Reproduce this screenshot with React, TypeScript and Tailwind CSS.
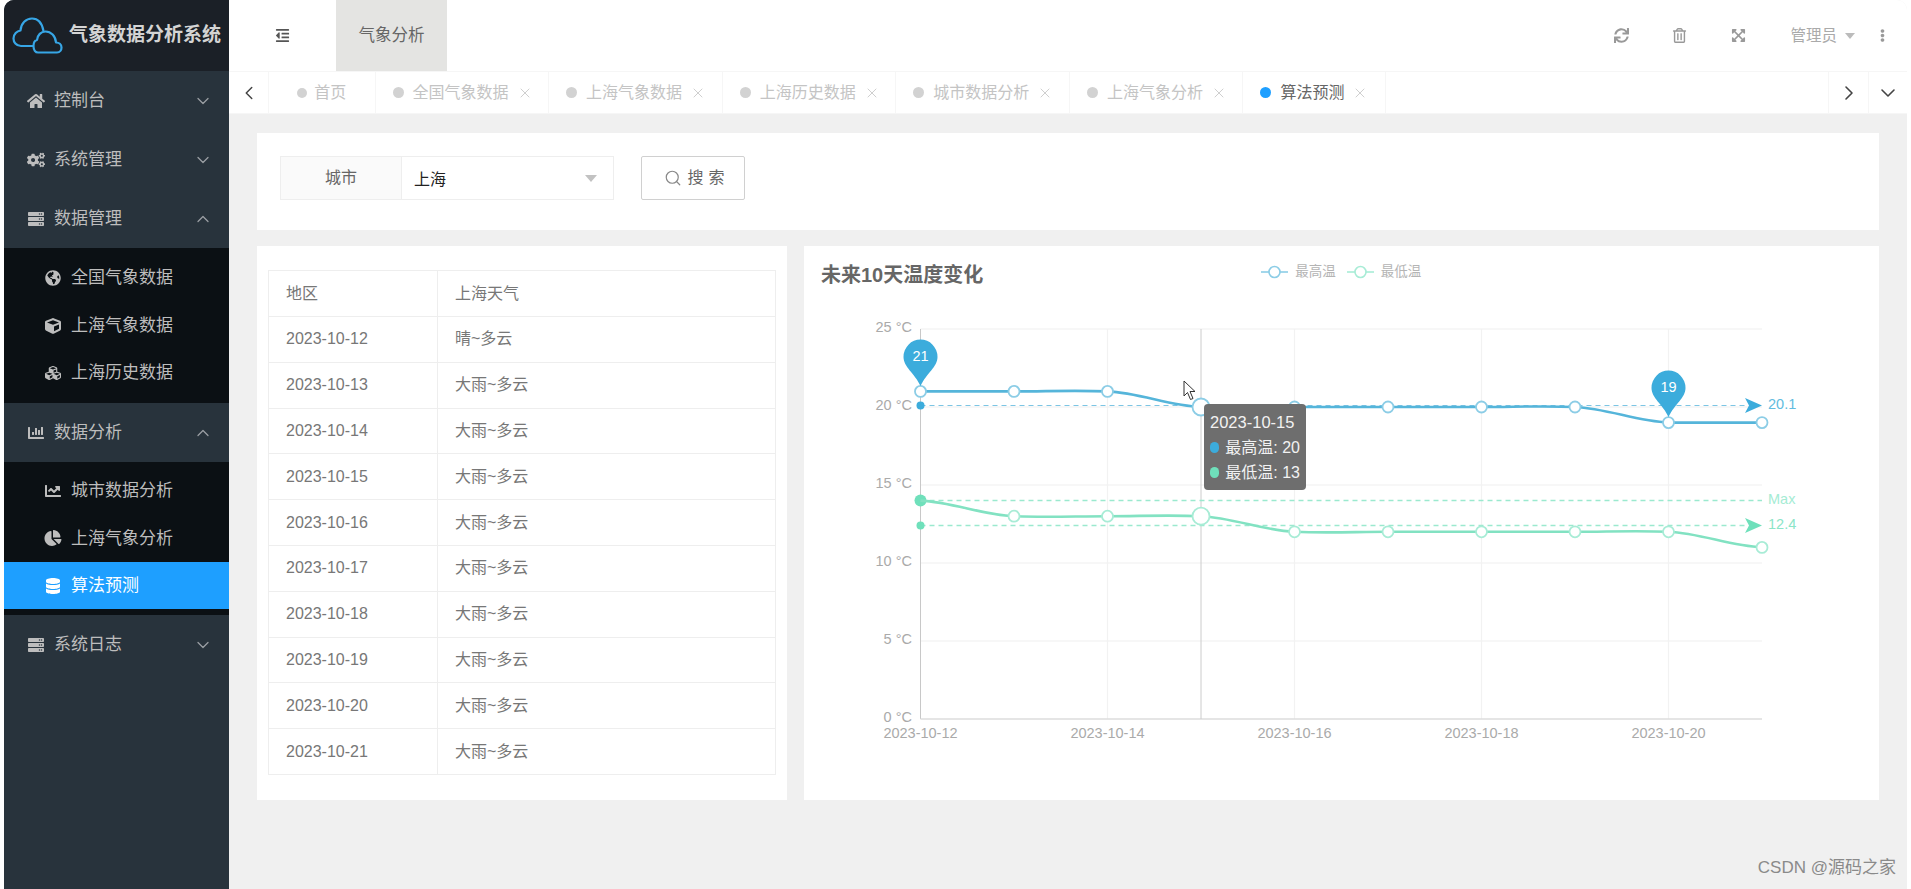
import { FaHome, FaCogs, FaServer, FaGlobeAmericas, FaCube, FaCubes, FaChartBar, FaChartLine, FaChartPie, FaDatabase, FaSync, FaRegTrashAlt, FaExpandArrowsAlt, FaEllipsisV, FaOutdent } from "react-icons/fa";
import { ChevronDown, ChevronUp, ChevronLeft, ChevronRight, Search, X } from "lucide-react";
import type { ComponentType } from "react";

const FONT = { fontFamily: '"Liberation Sans", "Noto Sans CJK SC", sans-serif' };

const tabs = ["全国气象数据", "上海气象数据", "上海历史数据", "城市数据分析", "上海气象分析"];

const rows = [
  ["2023-10-12", "晴~多云"],
  ["2023-10-13", "大雨~多云"],
  ["2023-10-14", "大雨~多云"],
  ["2023-10-15", "大雨~多云"],
  ["2023-10-16", "大雨~多云"],
  ["2023-10-17", "大雨~多云"],
  ["2023-10-18", "大雨~多云"],
  ["2023-10-19", "大雨~多云"],
  ["2023-10-20", "大雨~多云"],
  ["2023-10-21", "大雨~多云"],
];

const BLUE = "#3cacdc";
const GREEN = "#6fe0bb";
const xAt = (i: number) => 920.5 + i * 93.5;
const yAt = (v: number) => 719 - 15.6 * v;

const maxTemp = [21, 21, 21, 20, 20, 20, 20, 20, 19, 19];
const minTemp = [14, 13, 13, 13, 12, 12, 12, 12, 12, 11];

// smooth line the way echarts draws it, flat where neighbours are equal
const linePath = (data: number[]) => {
  let d = `M${xAt(0)} ${yAt(data[0])}`;
  for (let i = 0; i < data.length - 1; i++) {
    const x0 = xAt(i);
    const x1 = xAt(i + 1);
    const y0 = yAt(data[i]);
    const y1 = yAt(data[i + 1]);
    const prev = i > 0 ? yAt(data[i - 1]) : y0;
    const next = i < data.length - 2 ? yAt(data[i + 2]) : y1;
    const last = i === data.length - 2 && y0 === y1;
    const c1 = last ? y0 : y0 + (y1 - prev) * 0.09;
    const c2 = y1 - (next - y0) * 0.09;
    d += ` C${x0 + 32} ${c1} ${x1 - 32} ${c2} ${x1} ${y1}`;
  }
  return d;
};

const Pin = ({ x, tip, label }: { x: number; tip: number; label: string }) => (
  <g>
    <path
      d={`M${x} ${tip} C${x - 6} ${tip - 13} ${x - 17} ${tip - 19} ${x - 17} ${tip - 29} A17 17.5 0 1 1 ${x + 17} ${tip - 29} C${x + 17} ${tip - 19} ${x + 6} ${tip - 13} ${x} ${tip} Z`}
      fill={BLUE}
    />
    <text x={x} y={tip - 25} textAnchor="middle" fontSize="14.5" fill="#fff">
      {label}
    </text>
  </g>
);

const TempChart = () => (
  <svg viewBox="804 296 1075 504" className="block w-full h-[504px]" style={FONT}>
    {[25, 20, 15, 10, 5].map((v) => (
      <line key={v} x1="920.5" x2="1762" y1={yAt(v)} y2={yAt(v)} stroke="#f0f0f0" strokeWidth="1.2" />
    ))}
    {[2, 4, 6, 8].map((i) => (
      <line key={i} x1={xAt(i)} x2={xAt(i)} y1="329" y2="719" stroke="#f2f2f2" strokeWidth="1.2" />
    ))}
    <line x1="920.5" x2="920.5" y1="329" y2="719" stroke="#c8c8c8" strokeWidth="1" />
    <line x1="920.5" x2="1762" y1="719" y2="719" stroke="#dcdcdc" strokeWidth="1.6" />
    <line x1="1201" x2="1201" y1="329" y2="719" stroke="#cccccc" strokeWidth="1" />

    {[0, 5, 10, 15, 20, 25].map((v) => (
      <text key={v} x="912" y={yAt(v) + 3} textAnchor="end" fontSize="14.5" fill="#aaaaaa">
        {v} °C
      </text>
    ))}
    {[0, 2, 4, 6, 8].map((i) => (
      <text key={i} x={xAt(i)} y="738" textAnchor="middle" fontSize="14.5" fill="#aaaaaa">
        {`2023-10-${12 + i}`}
      </text>
    ))}

    {/* average and max lines */}
    <line x1="920.5" x2="1748" y1="405.5" y2="405.5" stroke="#7cc5e4" strokeWidth="1.2" strokeDasharray="5 4" />
    <line x1="920.5" x2="1748" y1="525.5" y2="525.5" stroke="#9be9cf" strokeWidth="1.3" strokeDasharray="5 4" />
    <line x1="920.5" x2="1762" y1="500.5" y2="500.5" stroke="#9be9cf" strokeWidth="1.3" strokeDasharray="5 4" />
    <path d="M1745 398 L1762 405.5 L1745 413 L1749 405.5 Z" fill={BLUE} />
    <path d="M1745 518 L1762 525.5 L1745 533 L1749 525.5 Z" fill={GREEN} />
    <circle cx="920.5" cy="405.5" r="4" fill={BLUE} />
    <circle cx="920.5" cy="525.5" r="4" fill={GREEN} />
    <circle cx="920.5" cy="500.5" r="6" fill={GREEN} />
    <text x="1768" y="409" fontSize="14.5" fill="#62bce0">20.1</text>
    <text x="1768" y="504" fontSize="14.5" fill="#a5ecd4">Max</text>
    <text x="1768" y="529" fontSize="14.5" fill="#8ce5c8">12.4</text>

    <path d={linePath(maxTemp)} fill="none" stroke="#55b5da" strokeWidth="2.6" />
    <path d={linePath(minTemp)} fill="none" stroke="#82e2c2" strokeWidth="2.6" />

    {maxTemp.map((v, i) => (
      <circle key={i} cx={xAt(i)} cy={yAt(v)} r={i === 3 ? 8.5 : 5.5} fill="#fff" stroke="#8ccde6" strokeWidth="1.8" />
    ))}
    {minTemp.map((v, i) =>
      i === 0 ? null : (
        <circle key={i} cx={xAt(i)} cy={yAt(v)} r={i === 3 ? 8.5 : 5.5} fill="#fff" stroke="#a8ecd6" strokeWidth="1.8" />
      )
    )}

    <Pin x={920.5} tip={386} label="21" />
    <Pin x={1668.5} tip={417} label="19" />
  </svg>
);

const LegendItem = ({ color, label }: { color: string; label: string }) => (
  <div className="flex items-center gap-[7px]">
    <svg width="27" height="14" viewBox="0 0 27 14">
      <line x1="0" x2="27" y1="7" y2="7" stroke={color} strokeWidth="1.6" />
      <circle cx="13.5" cy="7" r="5.5" fill="#fff" stroke={color} strokeWidth="1.6" />
    </svg>
    <span className="text-[13.5px] text-[#b4b4b4]">{label}</span>
  </div>
);

const SubItem = ({ Icon, label, active }: { Icon: ComponentType<{ className?: string }>; label: string; active?: boolean }) => (
  <div className={`flex h-[47.4px] items-center pl-[40px] ${active ? "bg-[#1e9fff] text-white" : "text-[#bdbdbd]"}`}>
    <span className="flex w-[27px] items-center">
      <Icon className="h-[16px] w-[18px]" />
    </span>
    <span className="text-[17px]">{label}</span>
  </div>
);

const MenuItem = ({ Icon, label, open }: { Icon: ComponentType<{ className?: string }>; label: string; open?: boolean }) => (
  <div className="flex h-[59px] items-center pl-[23px] pr-[16px] text-[#bdbdbd]">
    <span className="flex w-[27px] items-center">
      <Icon className="h-[16px] w-[18px]" />
    </span>
    <span className="flex-1 text-[17px]">{label}</span>
    {open ? <ChevronUp className="h-[20px] w-[20px] text-[#9a9fa3]" strokeWidth={1.5} /> : <ChevronDown className="h-[20px] w-[20px] text-[#9a9fa3]" strokeWidth={1.5} />}
  </div>
);

const Sidebar = () => (
  <aside className="flex w-[225px] shrink-0 flex-col overflow-hidden rounded-tl-[10px] bg-[#28333c]">
    <div className="flex h-[71px] items-center gap-[6px] bg-[#1b2027] pl-[8px]">
      <svg width="51" height="37" viewBox="12 17 51 37" fill="none" stroke="#37a6e6" strokeWidth="2.2" strokeLinejoin="round">
        <path d="M33.5 46 H21 C16 46 13.5 42 13.5 38.5 C13.5 34 17 31 20.5 30.5 C21 23 26 18.5 32 18.5 C38 18.5 42 22.5 43.5 31" />
        <path d="M38 52.5 H57 C60 52.5 61.5 50 61.5 47.5 C61.5 44.5 59 42.5 56 42.5 C55.5 36 51 31.5 45.5 31.5 C41 31.5 37.5 35 37 40 C35 40.5 33.5 43 33.5 46 C33.5 50 35.5 52.5 38 52.5 Z" />
      </svg>
      <span className="text-[19px] font-bold text-[#d4d4d4] whitespace-nowrap">气象数据分析系统</span>
    </div>
    <MenuItem Icon={FaHome} label="控制台" />
    <MenuItem Icon={FaCogs} label="系统管理" />
    <MenuItem Icon={FaServer} label="数据管理" open />
    <div className="bg-[#0b1014] py-[6.5px]">
      <SubItem Icon={FaGlobeAmericas} label="全国气象数据" />
      <SubItem Icon={FaCube} label="上海气象数据" />
      <SubItem Icon={FaCubes} label="上海历史数据" />
    </div>
    <MenuItem Icon={FaChartBar} label="数据分析" open />
    <div className="bg-[#0b1014] pb-[6px] pt-[5px]">
      <SubItem Icon={FaChartLine} label="城市数据分析" />
      <SubItem Icon={FaChartPie} label="上海气象分析" />
      <SubItem Icon={FaDatabase} label="算法预测" active />
    </div>
    <MenuItem Icon={FaServer} label="系统日志" />
  </aside>
);

const TopBar = () => (
  <header className="flex h-[71px] items-center bg-white">
    <div className="flex h-full w-[107px] items-center justify-center">
      <FaOutdent className="h-[15px] w-[17px] text-[#555]" />
    </div>
    <div className="flex h-full w-[111px] items-center justify-center bg-[#e4e4e2] text-[16.5px] text-[#666]">气象分析</div>
    <div className="flex-1" />
    <div className="flex items-center text-[#999]">
      <FaSync className="mr-[43px] h-[15px] w-[15px]" />
      <FaRegTrashAlt className="mr-[44px] h-[15px] w-[15px]" />
      <FaExpandArrowsAlt className="mr-[44px] h-[15px] w-[15px]" />
      <span className="text-[15.5px] text-[#aaa]">管理员</span>
      <span className="ml-[8px] h-0 w-0 border-x-[5.5px] border-t-[6px] border-x-transparent border-t-[#bbb]" />
      <FaEllipsisV className="ml-[21px] mr-[18px] h-[13px] w-[13px]" />
    </div>
  </header>
);

const TabBar = () => (
  <nav className="flex h-[43px] items-stretch border-y border-[#f6f6f6] bg-white">
    <div className="flex w-[40px] items-center justify-center border-r border-[#f6f6f6]">
      <ChevronLeft className="h-[22px] w-[22px] text-[#444]" strokeWidth={1.6} />
    </div>
    <div className="flex w-[106.5px] items-center justify-center gap-[7px] border-r border-[#f6f6f6] text-[16px] text-[#c4c4c4]">
      <span className="h-[10px] w-[10px] rounded-full bg-[#d2d2d2]" />
      首页
    </div>
    {tabs.map((t) => (
      <div key={t} className="flex w-[173.6px] items-center border-r border-[#f6f6f6] pl-[17px] text-[16px] text-[#c4c4c4]">
        <span className="mr-[9px] h-[11px] w-[11px] rounded-full bg-[#d2d2d2]" />
        <span>{t}</span>
        <X className="ml-[8px] h-[16px] w-[16px] text-[#cfcfcf]" strokeWidth={1.5} />
      </div>
    ))}
    <div className="flex w-[142.4px] items-center border-r border-[#f6f6f6] pl-[17px] text-[16px] text-[#666]">
      <span className="mr-[9px] h-[11px] w-[11px] rounded-full bg-[#1e9fff]" />
      <span>算法预测</span>
      <X className="ml-[8px] h-[16px] w-[16px] text-[#cfcfcf]" strokeWidth={1.5} />
    </div>
    <div className="flex-1" />
    <div className="flex w-[40px] items-center justify-center border-l border-[#f6f6f6]">
      <ChevronRight className="h-[24px] w-[24px] text-[#444]" strokeWidth={1.6} />
    </div>
    <div className="flex w-[39px] items-center justify-center border-l border-[#f6f6f6]">
      <ChevronDown className="h-[24px] w-[24px] text-[#444]" strokeWidth={1.6} />
    </div>
  </nav>
);

const SearchCard = () => (
  <section className="flex h-[97px] items-start bg-white pl-[23px] pt-[23px]">
    <div className="flex h-[44px] w-[334px] border border-[#eeeeee]">
      <div className="flex w-[121px] items-center justify-center border-r border-[#eeeeee] bg-[#fafafa] text-[16px] text-[#666]">城市</div>
      <div className="flex flex-1 items-center pl-[12px] pr-[16px] text-[16px] text-[#222]">
        <span className="flex-1 pt-[3px]">上海</span>
        <span className="h-0 w-0 border-x-[6px] border-t-[7px] border-x-transparent border-t-[#c2c2c2]" />
      </div>
    </div>
    <button className="ml-[27px] flex h-[44px] w-[104px] items-center justify-center gap-[5px] rounded-[2px] border border-[#d0d0d0] bg-white pl-[8px] text-[16px] tracking-[5px] text-[#666]">
      <Search className="h-[18px] w-[18px] text-[#888]" strokeWidth={1.6} />
      搜索
    </button>
  </section>
);

const WeatherTable = () => (
  <section className="w-[530px] shrink-0 bg-white px-[11px] pt-[24px]">
    <table className="w-full table-fixed border-collapse text-[16px] text-[#777]">
      <colgroup>
        <col className="w-[169px]" />
        <col />
      </colgroup>
      <thead>
        <tr className="h-[46px]">
          <th className="border border-[#eeeeee] pl-[17px] text-left font-normal">地区</th>
          <th className="border border-[#eeeeee] pl-[17px] text-left font-normal">上海天气</th>
        </tr>
      </thead>
      <tbody>
        {rows.map(([date, weather]) => (
          <tr key={date} className="h-[45.8px]">
            <td className="border border-[#eeeeee] pl-[17px]">{date}</td>
            <td className="border border-[#eeeeee] pl-[17px]">{weather}</td>
          </tr>
        ))}
      </tbody>
    </table>
  </section>
);

const ChartCard = () => (
  <section className="relative flex-1 bg-white">
    <div className="flex h-[50px] items-start pt-[14px]">
      <h3 className="ml-[17px] text-[20px] font-bold text-[#666]">未来10天温度变化</h3>
      <div className="ml-[278px] flex gap-[11px] pt-[2px]">
        <LegendItem color="#8ccde6" label="最高温" />
        <LegendItem color="#a8ecd6" label="最低温" />
      </div>
    </div>
    <TempChart />
    {/* tooltip and mouse pointer sit over the chart */}
    <div className="absolute left-[400px] top-[158px] h-[86px] w-[102px] rounded-[4px] bg-[#6e6e6e] px-[6px] pt-[6px] text-[16px] leading-[25px] text-[#f2f2f2]">
      <div className="whitespace-nowrap text-[16.5px]">2023-10-15</div>
      <div className="flex items-center gap-[6px] whitespace-nowrap">
        <span className="h-[11px] w-[11px] rounded-full bg-[#3cacdc]" />
        最高温: 20
      </div>
      <div className="flex items-center gap-[6px] whitespace-nowrap">
        <span className="h-[11px] w-[11px] rounded-full bg-[#6fe0bb]" />
        最低温: 13
      </div>
    </div>
    <svg className="absolute left-[379px] top-[134px]" width="14" height="21" viewBox="0 0 14 21">
      <path d="M1 1 V16 L4.5 12.5 L7.5 19.5 L10 18.5 L7 11.5 H12 Z" fill="#fff" stroke="#333" strokeWidth="1" strokeLinejoin="round" />
    </svg>
  </section>
);

export default function App() {
  return (
    <div className="relative flex h-[889px] w-[1911px] overflow-hidden bg-white px-[4px]" style={FONT}>
      <Sidebar />
      <div className="flex min-w-0 flex-1 flex-col overflow-hidden rounded-tr-[10px] bg-[#f0f0f0]">
        <TopBar />
        <TabBar />
        <main className="flex-1 px-[28px] pt-[19px]">
          <SearchCard />
          <div className="mt-[16px] flex h-[554px] gap-[17px]">
            <WeatherTable />
            <ChartCard />
          </div>
        </main>
      </div>
      {/* site watermark over the page corner */}
      <div className="absolute bottom-[9px] right-[15px] text-[17px] text-[#8a8a8a]">CSDN @源码之家</div>
    </div>
  );
}
